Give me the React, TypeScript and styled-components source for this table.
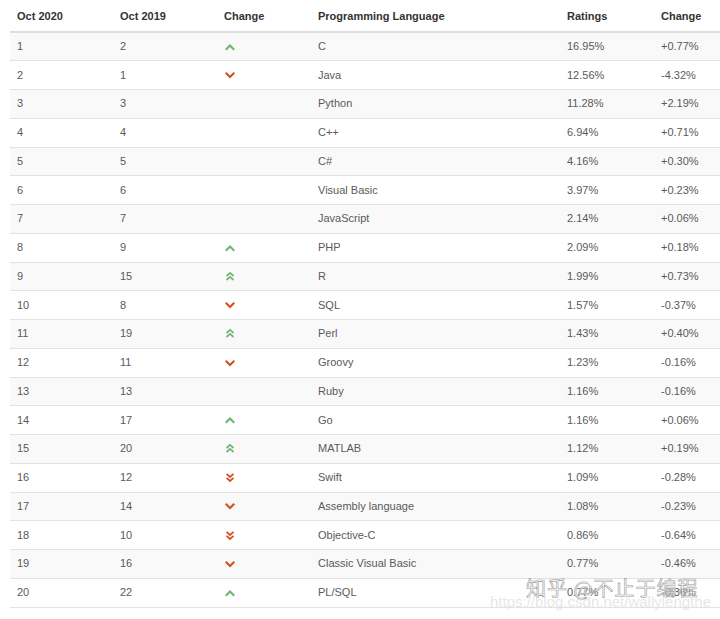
import styled, { createGlobalStyle } from "styled-components";

type Trend = "up" | "up2" | "down" | "down2" | null;

type Row = {
  now: number;
  prev: number;
  trend: Trend;
  lang: string;
  rating: string;
  change: string;
};

const rows: Row[] = [
  { now: 1, prev: 2, trend: "up", lang: "C", rating: "16.95%", change: "+0.77%" },
  { now: 2, prev: 1, trend: "down", lang: "Java", rating: "12.56%", change: "-4.32%" },
  { now: 3, prev: 3, trend: null, lang: "Python", rating: "11.28%", change: "+2.19%" },
  { now: 4, prev: 4, trend: null, lang: "C++", rating: "6.94%", change: "+0.71%" },
  { now: 5, prev: 5, trend: null, lang: "C#", rating: "4.16%", change: "+0.30%" },
  { now: 6, prev: 6, trend: null, lang: "Visual Basic", rating: "3.97%", change: "+0.23%" },
  { now: 7, prev: 7, trend: null, lang: "JavaScript", rating: "2.14%", change: "+0.06%" },
  { now: 8, prev: 9, trend: "up", lang: "PHP", rating: "2.09%", change: "+0.18%" },
  { now: 9, prev: 15, trend: "up2", lang: "R", rating: "1.99%", change: "+0.73%" },
  { now: 10, prev: 8, trend: "down", lang: "SQL", rating: "1.57%", change: "-0.37%" },
  { now: 11, prev: 19, trend: "up2", lang: "Perl", rating: "1.43%", change: "+0.40%" },
  { now: 12, prev: 11, trend: "down", lang: "Groovy", rating: "1.23%", change: "-0.16%" },
  { now: 13, prev: 13, trend: null, lang: "Ruby", rating: "1.16%", change: "-0.16%" },
  { now: 14, prev: 17, trend: "up", lang: "Go", rating: "1.16%", change: "+0.06%" },
  { now: 15, prev: 20, trend: "up2", lang: "MATLAB", rating: "1.12%", change: "+0.19%" },
  { now: 16, prev: 12, trend: "down2", lang: "Swift", rating: "1.09%", change: "-0.28%" },
  { now: 17, prev: 14, trend: "down", lang: "Assembly language", rating: "1.08%", change: "-0.23%" },
  { now: 18, prev: 10, trend: "down2", lang: "Objective-C", rating: "0.86%", change: "-0.64%" },
  { now: 19, prev: 16, trend: "down", lang: "Classic Visual Basic", rating: "0.77%", change: "-0.46%" },
  { now: 20, prev: 22, trend: "up", lang: "PL/SQL", rating: "0.77%", change: "-0.36%" },
];

const GlobalStyle = createGlobalStyle`
  html, body {
    margin: 0;
    padding: 0;
    background: #fff;
    overflow: hidden;
  }
  body {
    font-family: "Liberation Sans", Arial, sans-serif;
  }
`;

const Page = styled.div`
  position: relative;
  width: 720px;
  height: 619px;
  padding-left: 10px;
  box-sizing: border-box;
`;

const Table = styled.table`
  width: 720px;
  border-collapse: collapse;
  table-layout: fixed;
  font-size: 11px;
  color: #5a5a5a;
`;

const Head = styled.th<{ $w: number }>`
  width: ${(p) => p.$w}px;
  height: 32px;
  padding: 0 7px;
  box-sizing: border-box;
  text-align: left;
  font-weight: bold;
  color: #333;
  border-bottom: 2px solid #ddd;
  vertical-align: middle;
`;

const BodyRow = styled.tr`
  &:nth-child(odd) {
    background: #f9f9f9;
  }
`;

const Cell = styled.td`
  height: 28.75px;
  padding: 0 7px;
  box-sizing: border-box;
  border-top: 1px solid #e2e2e2;
  vertical-align: middle;
  white-space: nowrap;
  line-height: 13px;
  tr:first-child > & {
    border-top: none;
  }
  tr:last-child > & {
    border-bottom: 1px solid #e2e2e2;
  }
`;

const IconCell = styled(Cell)`
  padding-left: 8px;
`;

const Glyph = styled.svg`
  display: block;
`;

const Chevron = ({ trend }: { trend: Trend }) => {
  if (!trend) return null;
  const up = trend === "up" || trend === "up2";
  const color = up ? "#72b573" : "#d5511f";
  const double = trend === "up2" || trend === "down2";
  const one = up ? "M1.5 6 L5 2.5 L8.5 6" : "M1.5 2.5 L5 6 L8.5 2.5";
  if (!double) {
    return (
      <Glyph width="10" height="8" viewBox="0 0 10 8">
        <path d={one} fill="none" stroke={color} strokeWidth="2.2" strokeLinecap="square" />
      </Glyph>
    );
  }
  const a = up ? "M1.5 5 L5 1.8 L8.5 5" : "M1.5 1.8 L5 5 L8.5 1.8";
  const b = up ? "M1.5 9 L5 5.8 L8.5 9" : "M1.5 5.8 L5 9 L8.5 5.8";
  return (
    <Glyph width="10" height="11" viewBox="0 0 10 11">
      <path d={a} fill="none" stroke={color} strokeWidth="1.7" />
      <path d={b} fill="none" stroke={color} strokeWidth="1.7" />
    </Glyph>
  );
};

// faint site watermark laid over the last row, as in the screenshot
const Watermark = styled.div`
  position: absolute;
  left: 500px;
  top: 576px;
  width: 220px;
  pointer-events: none;
`;

const MarkTitle = styled.div`
  font-family: "Noto Sans CJK SC", sans-serif;
  font-size: 20px;
  letter-spacing: 1px;
  color: rgba(255, 255, 255, 0.85);
  -webkit-text-stroke: 0.6px #9a9a9a;
  padding-left: 26px;
  line-height: 24px;
`;

const MarkUrl = styled.div`
  font-family: "Liberation Sans", Arial, sans-serif;
  font-size: 15px;
  color: rgba(225, 225, 225, 0.8);
  margin-left: -10px;
  line-height: 16px;
  margin-top: -6px;
`;

const cols = [103, 104, 94, 249, 94, 76];
const heads = ["Oct 2020", "Oct 2019", "Change", "Programming Language", "Ratings", "Change"];

export default function App() {
  return (
    <Page>
      <GlobalStyle />
      <Table>
        <thead>
          <tr>
            {heads.map((h, i) => (
              <Head key={i} $w={cols[i]}>
                {h}
              </Head>
            ))}
          </tr>
        </thead>
        <tbody>
          {rows.map((r) => (
            <BodyRow key={r.now}>
              <Cell>{r.now}</Cell>
              <Cell>{r.prev}</Cell>
              <IconCell>
                <Chevron trend={r.trend} />
              </IconCell>
              <Cell>{r.lang}</Cell>
              <Cell>{r.rating}</Cell>
              <Cell>{r.change}</Cell>
            </BodyRow>
          ))}
        </tbody>
      </Table>
      <Watermark>
        <MarkTitle>知乎 @不止于编程</MarkTitle>
        <MarkUrl>https://blog.csdn.net/wallylengthe</MarkUrl>
      </Watermark>
    </Page>
  );
}
